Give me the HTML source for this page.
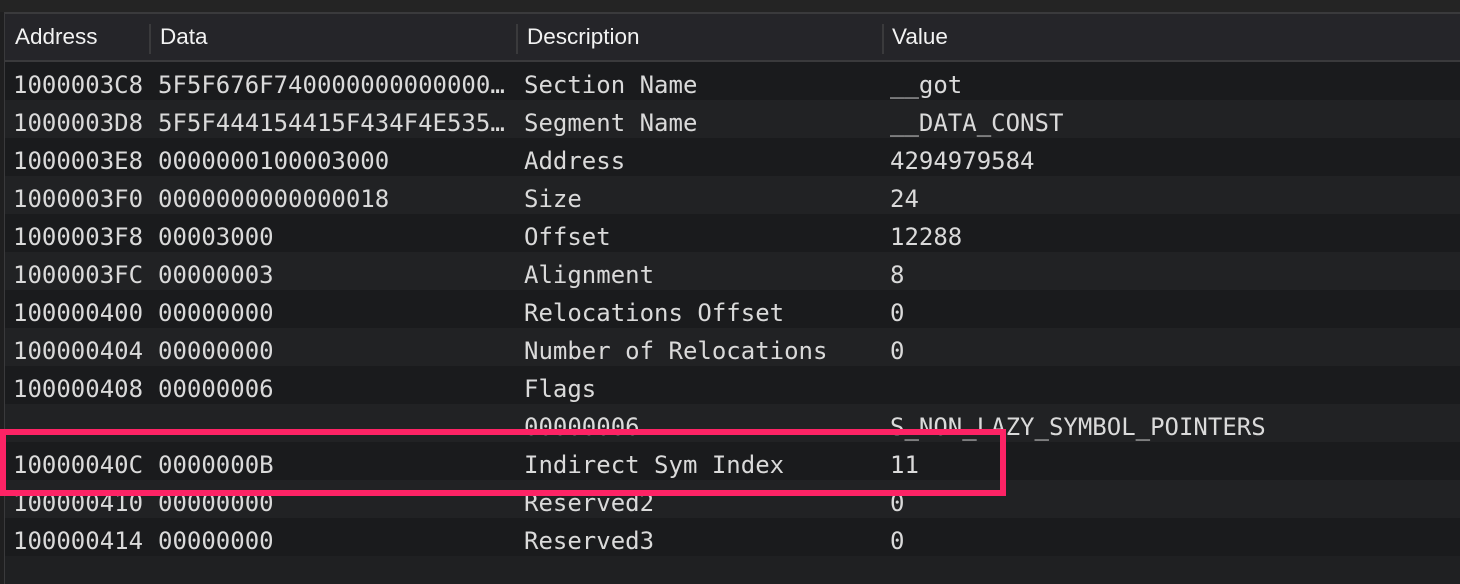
<!DOCTYPE html>
<html><head><style>
html,body{margin:0;padding:0;width:1460px;height:582px;overflow:hidden;background:#1f1f20;}
.top{position:absolute;left:0;top:0;width:1460px;height:12px;background:#242424;}
.frame{position:absolute;left:4px;top:12px;width:1456px;height:570px;border-left:1px solid #3a3a3c;border-top:2px solid #3a3a3c;background:#1f2022;}
.hdr{position:absolute;left:5px;top:14px;width:1455px;height:46px;background:#252529;border-bottom:2px solid #3a3a3c;font-family:"Liberation Sans",sans-serif;font-size:22.5px;color:#f2f2f2;}
.hdr span{position:absolute;top:10px;}
.sep{position:absolute;top:10px;width:2px;height:30px;background:#3a3a3c;}
.row{position:absolute;left:5px;width:1455px;height:38px;font-family:"DejaVu Sans Mono","Liberation Mono",monospace;font-size:24px;color:#dadada;}
.row span{position:absolute;top:9px;white-space:pre;}
.d{background:#1a1b1d;}.l{background:#212224;}
.a{left:8px}.b{left:153px}.c{left:519px}.v{left:885px}
.box{position:absolute;left:0;top:429px;width:994px;height:55px;border:6px solid #fd2365;}
</style></head><body>
<div class="top"></div>
<div class="frame"></div>
<div class="hdr">
<span style="left:10px">Address</span><div class="sep" style="left:144px"></div>
<span style="left:155px">Data</span><div class="sep" style="left:511px"></div>
<span style="left:522px">Description</span><div class="sep" style="left:877px"></div>
<span style="left:887px">Value</span>
</div>
<div class="row d" style="top:62px"><span class="a">1000003C8</span><span class="b">5F5F676F740000000000000…</span><span class="c">Section Name</span><span class="v">__got</span></div>
<div class="row l" style="top:100px"><span class="a">1000003D8</span><span class="b">5F5F444154415F434F4E535…</span><span class="c">Segment Name</span><span class="v">__DATA_CONST</span></div>
<div class="row d" style="top:138px"><span class="a">1000003E8</span><span class="b">0000000100003000</span><span class="c">Address</span><span class="v">4294979584</span></div>
<div class="row l" style="top:176px"><span class="a">1000003F0</span><span class="b">0000000000000018</span><span class="c">Size</span><span class="v">24</span></div>
<div class="row d" style="top:214px"><span class="a">1000003F8</span><span class="b">00003000</span><span class="c">Offset</span><span class="v">12288</span></div>
<div class="row l" style="top:252px"><span class="a">1000003FC</span><span class="b">00000003</span><span class="c">Alignment</span><span class="v">8</span></div>
<div class="row d" style="top:290px"><span class="a">100000400</span><span class="b">00000000</span><span class="c">Relocations Offset</span><span class="v">0</span></div>
<div class="row l" style="top:328px"><span class="a">100000404</span><span class="b">00000000</span><span class="c">Number of Relocations</span><span class="v">0</span></div>
<div class="row d" style="top:366px"><span class="a">100000408</span><span class="b">00000006</span><span class="c">Flags</span><span class="v"></span></div>
<div class="row l" style="top:404px"><span class="c">00000006</span><span class="v">S_NON_LAZY_SYMBOL_POINTERS</span></div>
<div class="row d" style="top:442px"><span class="a">10000040C</span><span class="b">0000000B</span><span class="c">Indirect Sym Index</span><span class="v">11</span></div>
<div class="row l" style="top:480px"><span class="a">100000410</span><span class="b">00000000</span><span class="c">Reserved2</span><span class="v">0</span></div>
<div class="row d" style="top:518px"><span class="a">100000414</span><span class="b">00000000</span><span class="c">Reserved3</span><span class="v">0</span></div>
<div class="box"></div>
</body></html>
